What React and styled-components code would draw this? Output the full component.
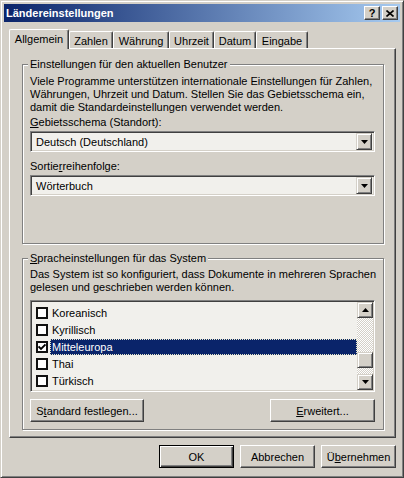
import React from 'react';
import styled, { createGlobalStyle, css } from 'styled-components';

const face = '#D4D0C8';
const shadow = '#808080';
const dark = '#404040';
const field = '#F1F0EC';
const FONT = '"Liberation Sans", Arial, sans-serif';

const Global = createGlobalStyle`
  html, body { margin: 0; padding: 0; background: ${face}; }
  body { font-family: ${FONT}; font-size: 11px; color: #000; }
  * { box-sizing: border-box; }
`;

const Window = styled.div`
  width: 404px;
  height: 478px;
  background: ${face};
  border: 1px solid;
  border-color: ${face} ${dark} ${dark} ${face};
  box-shadow: inset 1px 1px 0 #fff, inset -1px -1px 0 ${shadow};
  padding: 3px;
  display: flex;
  flex-direction: column;
`;

const TitleBar = styled.div`
  height: 18px;
  flex: none;
  display: flex;
  align-items: center;
  padding: 0 2px 0 2px;
  background: linear-gradient(to right, #0A246A, #A6CAF0);
  color: #fff;
  font-weight: bold;
  font-size: 11px;
`;

const Title = styled.span`
  flex: 1;
`;

const CaptionButton = styled.div`
  width: 16px;
  height: 14px;
  background: ${face};
  border: 1px solid;
  border-color: #fff ${dark} ${dark} #fff;
  box-shadow: inset -1px -1px 0 ${shadow};
  display: flex;
  align-items: center;
  justify-content: center;
  color: #000;
  font-weight: bold;
  font-size: 11px;
  line-height: 1;
  & + & { margin-left: 2px; }
`;

const Client = styled.div`
  flex: 1;
  display: flex;
  flex-direction: column;
  padding: 7px 4px 0 5px;
`;

const TabStrip = styled.div`
  display: flex;
  align-items: flex-end;
  height: 19px;
  position: relative;
  z-index: 1;
`;

const Tab = styled.div`
  width: ${p => p.$w}px;
  height: 17px;
  display: flex;
  align-items: center;
  justify-content: center;
  background: ${face};
  border-top: 1px solid #fff;
  border-left: 1px solid #fff;
  border-right: 1px solid ${dark};
  box-shadow: inset -1px 0 0 ${shadow};
  border-radius: 2px 2px 0 0;
  padding-top: 1px;
  ${p => p.$active && css`
    height: 20px;
    margin-bottom: -1px;
    padding-top: 0;
    padding-bottom: 2px;
  `}
`;

const Panel = styled.div`
  height: 390px;
  flex: none;
  border: 1px solid;
  border-color: #fff ${dark} ${dark} #fff;
  box-shadow: inset -1px -1px 0 ${shadow};
  padding: 9px 11px 0 12px;
  display: flex;
  flex-direction: column;
  gap: 8px;
`;

const Group = styled.fieldset`
  margin: 0;
  height: ${p => p.$h}px;
  border: 1px solid ${shadow};
  box-shadow: inset 1px 1px 0 #fff, 1px 1px 0 #fff;
  padding: ${p => p.$pt}px 8px 0 7px;
  min-width: 0;
  display: flex;
  flex-direction: column;
`;

const Legend = styled.legend`
  padding: 0 2px;
  margin-left: -2px;
  line-height: 13px;
  background: ${face};
`;

const Text = styled.div`
  line-height: 13px;
  margin-top: ${p => p.$mt || 0}px;
  white-space: nowrap;
`;

const U = styled.span`
  text-decoration: underline;
  text-underline-offset: 1px;
`;

const Combo = styled.div`
  height: 21px;
  margin-top: 2px;
  display: flex;
  align-items: center;
  border: 1px solid;
  border-color: ${shadow} #fff #fff ${shadow};
  box-shadow: inset 1px 1px 0 ${dark}, inset -1px -1px 0 ${face};
  background: ${field};
  padding: 2px;
`;

const ComboText = styled.span`
  flex: 1;
  padding-left: 3px;
`;

const ArrowButton = styled.div`
  width: 16px;
  height: ${p => p.$h || 16}px;
  flex: none;
  background: ${face};
  border: 1px solid;
  border-color: ${face} ${dark} ${dark} ${face};
  box-shadow: inset 1px 1px 0 #fff, inset -1px -1px 0 ${shadow};
  display: flex;
  align-items: center;
  justify-content: center;
`;

const Arrow = ({ up }) => (
  <svg width="7" height="4" viewBox="0 0 7 4">
    <polygon points={up ? '3.5,0 7,4 0,4' : '0,0 7,0 3.5,4'} fill="#000" />
  </svg>
);

const ListBox = styled.div`
  height: 92px;
  margin-top: 6px;
  display: flex;
  border: 1px solid;
  border-color: ${shadow} #fff #fff ${shadow};
  box-shadow: inset 1px 1px 0 ${dark}, inset -1px -1px 0 ${face};
  background: ${field};
  padding: 1px;
`;

const Items = styled.div`
  flex: 1;
  padding: 2px 0 0 4px;
  display: flex;
  flex-direction: column;
  overflow: hidden;
`;

const Item = styled.div`
  height: 17px;
  flex: none;
  display: flex;
  align-items: center;
`;

const Check = styled.div`
  width: 12px;
  height: 12px;
  flex: none;
  border: 2px solid #111;
  background: #fff;
  display: flex;
  align-items: center;
  justify-content: center;
`;

const ItemLabel = styled.span`
  flex: 1;
  height: 16px;
  line-height: 16px;
  margin-left: 2px;
  padding-left: 2px;
  ${p => p.$selected && css`
    background: #0A246A;
    color: #fff;
    outline: 1px dotted #e8e8c8;
    outline-offset: -1px;
  `}
`;

const ScrollBar = styled.div`
  width: 16px;
  flex: none;
  display: flex;
  flex-direction: column;
`;

const Track = styled.div`
  flex: 1;
  background: repeating-conic-gradient(#fff 0 25%, ${face} 0 50%) 0 0 / 2px 2px;
  display: flex;
  flex-direction: column;
`;

const Thumb = styled.div`
  width: 16px;
  height: 16px;
  background: ${face};
  border: 1px solid;
  border-color: ${face} ${dark} ${dark} ${face};
  box-shadow: inset 1px 1px 0 #fff, inset -1px -1px 0 ${shadow};
`;

const ButtonRow = styled.div`
  display: flex;
  justify-content: ${p => p.$justify || 'space-between'};
  gap: ${p => p.$gap || 0}px;
  margin-top: ${p => p.$mt || 0}px;
`;

const Button = styled.button`
  width: ${p => p.$w}px;
  height: 23px;
  padding: 0;
  font: 11px ${FONT};
  color: #000;
  background: ${face};
  border: 1px solid;
  border-color: #fff ${dark} ${dark} #fff;
  box-shadow: inset -1px -1px 0 ${shadow};
  ${p => p.$default && css`
    border: 1px solid #000;
    box-shadow: inset 1px 1px 0 #fff, inset -1px -1px 0 ${dark}, inset -2px -2px 0 ${shadow};
  `}
`;

const CheckMark = () => (
  <svg width="8" height="8" viewBox="0 0 8 8">
    <path d="M0.5 3.5 L3 6 L7.5 1.5" stroke="#000" strokeWidth="1.8" fill="none" />
  </svg>
);

const tabs = [
  { label: 'Allgemein', w: 60, active: true },
  { label: 'Zahlen', w: 44 },
  { label: 'Währung', w: 56 },
  { label: 'Uhrzeit', w: 45 },
  { label: 'Datum', w: 42 },
  { label: 'Eingabe', w: 52 },
];

const languages = [
  { name: 'Koreanisch' },
  { name: 'Kyrillisch' },
  { name: 'Mitteleuropa', checked: true, selected: true },
  { name: 'Thai' },
  { name: 'Türkisch' },
];

export default function App() {
  return (
    <>
      <Global />
      <Window>
        <TitleBar>
          <Title>Ländereinstellungen</Title>
          <CaptionButton>?</CaptionButton>
          <CaptionButton>
            <svg width="8" height="7" viewBox="0 0 8 7">
              <path d="M0.5 0.5 L7.5 6.5 M7.5 0.5 L0.5 6.5" stroke="#000" strokeWidth="1.6" />
            </svg>
          </CaptionButton>
        </TitleBar>
        <Client>
          <TabStrip>
            {tabs.map(t => (
              <Tab key={t.label} $w={t.w} $active={t.active}>{t.label}</Tab>
            ))}
          </TabStrip>
          <Panel>
            <Group $h={186} $pt={4}>
              <Legend>Einstellungen für den aktuellen Benutzer</Legend>
              <Text>Viele Programme unterstützen internationale Einstellungen für Zahlen,</Text>
              <Text>Währungen, Uhrzeit und Datum. Stellen Sie das Gebietsschema ein,</Text>
              <Text>damit die Standardeinstellungen verwendet werden.</Text>
              <Text $mt={2}><U>G</U>ebietsschema (Standort):</Text>
              <Combo>
                <ComboText>Deutsch (Deutschland)</ComboText>
                <ArrowButton $h={17}><Arrow /></ArrowButton>
              </Combo>
              <Text $mt={8}>Sortie<U>r</U>reihenfolge:</Text>
              <Combo>
                <ComboText>Wörterbuch</ComboText>
                <ArrowButton $h={17}><Arrow /></ArrowButton>
              </Combo>
            </Group>
            <Group $h={178} $pt={3}>
              <Legend><U>S</U>pracheinstellungen für das System</Legend>
              <Text>Das System ist so konfiguriert, dass Dokumente in mehreren Sprachen</Text>
              <Text>gelesen und geschrieben werden können.</Text>
              <ListBox>
                <Items>
                  {languages.map(l => (
                    <Item key={l.name}>
                      <Check>{l.checked && <CheckMark />}</Check>
                      <ItemLabel $selected={l.selected}>{l.name}</ItemLabel>
                    </Item>
                  ))}
                </Items>
                <ScrollBar>
                  <ArrowButton><Arrow up /></ArrowButton>
                  <Track>
                    <Thumb style={{ marginTop: 34 }} />
                  </Track>
                  <ArrowButton><Arrow /></ArrowButton>
                </ScrollBar>
              </ListBox>
              <ButtonRow $mt={7}>
                <Button $w={114}>S<U>t</U>andard festlegen...</Button>
                <Button $w={105}><U>E</U>rweitert...</Button>
              </ButtonRow>
            </Group>
          </Panel>
          <ButtonRow $justify="flex-end" $gap={6} $mt={7}>
            <Button $w={75} $default>OK</Button>
            <Button $w={75}>Abbrechen</Button>
            <Button $w={75}>Ü<U>b</U>ernehmen</Button>
          </ButtonRow>
        </Client>
      </Window>
    </>
  );
}
